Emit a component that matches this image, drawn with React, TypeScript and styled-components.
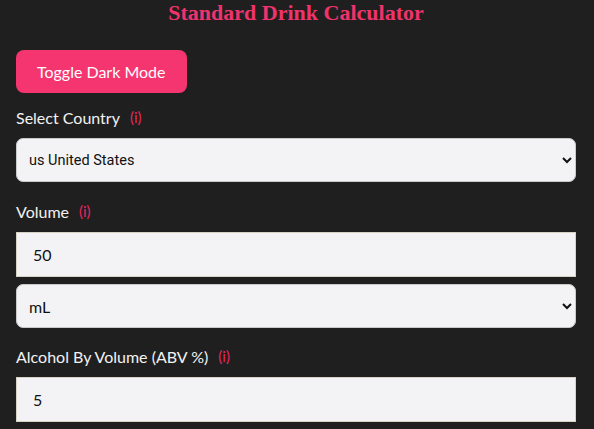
import React from "react";
import styled, { createGlobalStyle } from "styled-components";

const GlobalStyle = createGlobalStyle`
  body {
    margin: 0;
    background-color: #1f1f1f;
    font-family: Lato, "Open Sans", sans-serif;
  }
`;

const Page = styled.div`
  padding: 0 18px 0 16px;
  color: #f2f2f2;
`;

const Title = styled.h1`
  margin: 0;
  padding-top: 1px;
  text-align: center;
  font-family: "Liberation Serif", serif;
  font-weight: 700;
  font-size: 22px;
  line-height: 24px;
  color: #f0336c;
`;

const ToggleButton = styled.button`
  margin-top: 25px;
  height: 43px;
  padding: 0 21px;
  border: none;
  border-radius: 8px;
  background-color: #f5356f;
  color: #fff;
  font-family: Lato, sans-serif;
  font-size: 16px;
  cursor: pointer;
`;

const Label = styled.label<{ $top: number }>`
  display: flex;
  align-items: center;
  gap: 10px;
  margin-top: ${(p) => p.$top}px;
  margin-bottom: 10px;
  height: 22px;
  font-size: 16px;
  color: #f2f2f2;
`;

const Info = styled.span`
  color: #e8265e;
  font-size: 15px;
`;

const Select = styled.select<{ $font?: string; $size?: number }>`
  display: block;
  width: 100%;
  height: 44px;
  padding: 0 8px;
  border: 1px solid #c9c9c9;
  border-radius: 7px;
  background-color: #f3f3f5;
  color: #111;
  font-family: ${(p) => p.$font || "Lato, sans-serif"};
  font-size: ${(p) => p.$size || 16}px;
`;

const Input = styled.input`
  display: block;
  box-sizing: border-box;
  width: 100%;
  height: 45px;
  padding: 0 16px;
  border: 1px solid #d6d2c4;
  border-radius: 0;
  background-color: #f3f3f5;
  color: #111;
  font-family: Lato, sans-serif;
  font-size: 16px;
`;

const Gap = styled.div`
  height: 7px;
`;

export default function App() {
  return (
    <>
      <GlobalStyle />
      <Page>
        <Title>Standard Drink Calculator</Title>
        <ToggleButton>Toggle Dark Mode</ToggleButton>
        <Label $top={13}>
          Select Country <Info>(i)</Info>
        </Label>
        <Select $font="Roboto, sans-serif" $size={14.5} defaultValue="us">
          <option value="us">us United States</option>
        </Select>
        <Label $top={18}>
          Volume <Info>(i)</Info>
        </Label>
        <Input defaultValue="50" />
        <Gap />
        <Select defaultValue="ml">
          <option value="ml">mL</option>
        </Select>
        <Label $top={17}>
          Alcohol By Volume (ABV %) <Info>(i)</Info>
        </Label>
        <Input defaultValue="5" />
      </Page>
    </>
  );
}
